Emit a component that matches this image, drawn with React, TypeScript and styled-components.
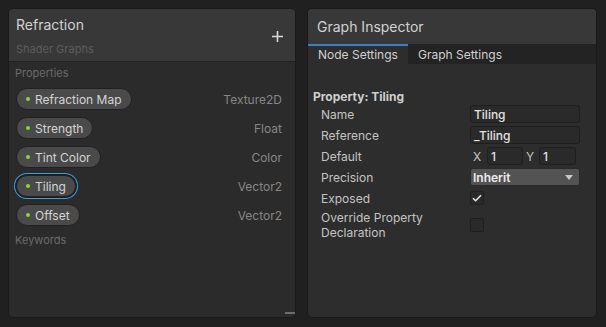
import styled, { createGlobalStyle } from "styled-components";

const GlobalStyle = createGlobalStyle`
  html, body {
    margin: 0;
    background: #202020;
    font-family: Inter, "Noto Sans", sans-serif;
    font-size: 12px;
    color: #c4c4c4;
  }
  * { box-sizing: border-box; }
`;

const Page = styled.div`
  display: flex;
  gap: 11px;
  padding: 8px 9px 9px 8px;
  height: 327px;
`;

const Panel = styled.div<{ $bg: string; $w: number }>`
  position: relative;
  width: ${(p) => p.$w}px;
  display: flex;
  flex-direction: column;
  background: ${(p) => p.$bg};
  border: 1px solid #1a1a1a;
  border-radius: 5px;
  overflow: hidden;
`;

const BlackboardHeader = styled.div`
  display: flex;
  align-items: center;
  justify-content: space-between;
  height: 53px;
  padding: 0 12px 0 7px;
  background: #383838;
  border-bottom: 1px solid #232323;
`;

const TitleBlock = styled.div`
  display: flex;
  flex-direction: column;
  gap: 8px;
  padding-top: 1px;
`;

const Title = styled.div`
  font-size: 14px;
  line-height: 18px;
  color: #d2d2d2;
`;

const Subtitle = styled.div`
  font-size: 11px;
  line-height: 14px;
  color: #5c5c5c;
`;

const AddButton = styled.div`
  display: flex;
  margin-top: 2px;
`;

const Section = styled.div<{ $top: number }>`
  padding: ${(p) => p.$top}px 0 0 6px;
  font-size: 11px;
  line-height: 16px;
  color: #6a6a6a;
`;

const PropList = styled.div`
  display: flex;
  flex-direction: column;
  gap: 7px;
  margin-top: 7px;
  margin-bottom: 6px;
`;

const PropRow = styled.div`
  display: flex;
  align-items: center;
  justify-content: space-between;
  padding: 0 13px 0 7px;
  height: 22px;
`;

const Pill = styled.div<{ $selected?: boolean }>`
  display: flex;
  align-items: center;
  gap: 5px;
  height: 22px;
  padding: 0 9px 0 9px;
  background: #4a4a4a;
  border: 1px solid #212121;
  border-radius: 11px;
  color: #d4d4d4;
  font-size: 12px;
  box-shadow: ${(p) =>
    p.$selected ? "0 0 0 1px #1e1e1e, 0 0 0 2px #3a9fe6" : "none"};
`;

const Dot = styled.span`
  width: 4px;
  height: 4px;
  border-radius: 50%;
  background: #8ad43c;
`;

const TypeLabel = styled.div`
  color: #878787;
  font-size: 12px;
`;

const ResizeHandle = styled.div`
  position: absolute;
  right: 0;
  bottom: 3px;
  width: 10px;
  height: 2px;
  background: #6c6c6c;
`;

const InspectorHeader = styled.div`
  display: flex;
  align-items: center;
  height: 35px;
  padding: 0 9px;
  background: #383838;
  font-size: 14px;
  color: #d2d2d2;
`;

const TabBar = styled.div`
  display: flex;
  height: 20px;
  background: #232323;
`;

const Tab = styled.div<{ $active?: boolean }>`
  display: flex;
  align-items: center;
  padding: 0 10px;
  width: ${(p) => (p.$active ? "100px" : "auto")};
  background: ${(p) => (p.$active ? "#2d2d2d" : "transparent")};
  box-shadow: ${(p) => (p.$active ? "inset 0 2px 0 #3b7ec2" : "none")};
  color: #d0d0d0;
  font-size: 12px;
`;

const InspectorBody = styled.div`
  display: flex;
  flex-direction: column;
  padding: 25px 0 0 5px;
`;

const PropertyTitle = styled.div`
  font-weight: 700;
  color: #cfcfcf;
  line-height: 16px;
`;

const Fields = styled.div`
  display: flex;
  flex-direction: column;
  gap: 3px;
`;

const FieldRow = styled.div<{ $h?: number }>`
  display: grid;
  grid-template-columns: 149px 110px;
  align-items: center;
  min-height: ${(p) => p.$h ?? 18}px;
  padding-left: 8px;
`;

const Label = styled.div`
  color: #c4c4c4;
  line-height: 15px;
`;

const TextField = styled.div<{ $w?: number }>`
  display: flex;
  align-items: center;
  height: 18px;
  width: ${(p) => (p.$w ? `${p.$w}px` : "100%")};
  padding: 0 3px;
  background: #2a2a2a;
  border: 1px solid #1f1f1f;
  border-radius: 3px;
  color: #e2e2e2;
  font-weight: 500;
`;

const Vector = styled.div`
  display: flex;
  align-items: center;
`;

const AxisLabel = styled.span<{ $w: number }>`
  width: ${(p) => p.$w}px;
  padding-left: 3px;
  color: #c4c4c4;
`;

const Dropdown = styled.div`
  display: flex;
  align-items: center;
  justify-content: space-between;
  height: 18px;
  padding: 0 6px 0 2px;
  background: #535353;
  border: 1px solid #2a2a2a;
  border-radius: 3px;
  color: #ececec;
  font-weight: 600;
`;

const Checkbox = styled.div`
  display: flex;
  align-items: center;
  justify-content: center;
  width: 14px;
  height: 14px;
  background: #2a2a2a;
  border: 1px solid #1f1f1f;
  border-radius: 2px;
`;

const properties = [
  { name: "Refraction Map", type: "Texture2D" },
  { name: "Strength", type: "Float" },
  { name: "Tint Color", type: "Color" },
  { name: "Tiling", type: "Vector2", selected: true },
  { name: "Offset", type: "Vector2" },
];

export default function App() {
  return (
    <>
      <GlobalStyle />
      <Page>
        <Panel $bg="#2b2b2b" $w={288}>
          <BlackboardHeader>
            <TitleBlock>
              <Title>Refraction</Title>
              <Subtitle>Shader Graphs</Subtitle>
            </TitleBlock>
            <AddButton>
              <svg width="11" height="11" viewBox="0 0 11 11">
                <path d="M5.5 0v11M0 5.5h11" stroke="#d8d8d8" strokeWidth="1.6" />
              </svg>
            </AddButton>
          </BlackboardHeader>
          <Section $top={3}>Properties</Section>
          <PropList>
            {properties.map((p) => (
              <PropRow key={p.name}>
                <Pill $selected={p.selected}>
                  <Dot />
                  {p.name}
                </Pill>
                <TypeLabel>{p.type}</TypeLabel>
              </PropRow>
            ))}
          </PropList>
          <Section $top={0}>Keywords</Section>
          <ResizeHandle />
        </Panel>
        <Panel $bg="#2d2d2d" $w={290}>
          <InspectorHeader>Graph Inspector</InspectorHeader>
          <TabBar>
            <Tab $active>Node Settings</Tab>
            <Tab>Graph Settings</Tab>
          </TabBar>
          <InspectorBody>
            <PropertyTitle>Property: Tiling</PropertyTitle>
            <Fields>
              <FieldRow>
                <Label>Name</Label>
                <TextField>Tiling</TextField>
              </FieldRow>
              <FieldRow>
                <Label>Reference</Label>
                <TextField>_Tiling</TextField>
              </FieldRow>
              <FieldRow>
                <Label>Default</Label>
                <Vector>
                  <AxisLabel $w={17}>X</AxisLabel>
                  <TextField $w={36}>1</TextField>
                  <AxisLabel $w={16}>Y</AxisLabel>
                  <TextField $w={37}>1</TextField>
                </Vector>
              </FieldRow>
              <FieldRow>
                <Label>Precision</Label>
                <Dropdown>
                  Inherit
                  <svg width="8" height="5" viewBox="0 0 8 5">
                    <path d="M0 0h8L4 5z" fill="#c8c8c8" />
                  </svg>
                </Dropdown>
              </FieldRow>
              <FieldRow>
                <Label>Exposed</Label>
                <Checkbox>
                  <svg width="10" height="8" viewBox="0 0 10 8">
                    <path
                      d="M1 4.2l2.6 2.6L9 1.2"
                      fill="none"
                      stroke="#e8e8e8"
                      strokeWidth="1.5"
                    />
                  </svg>
                </Checkbox>
              </FieldRow>
              <FieldRow $h={30}>
                <Label>
                  Override Property
                  <br />
                  Declaration
                </Label>
                <Checkbox />
              </FieldRow>
            </Fields>
          </InspectorBody>
        </Panel>
      </Page>
    </>
  );
}
